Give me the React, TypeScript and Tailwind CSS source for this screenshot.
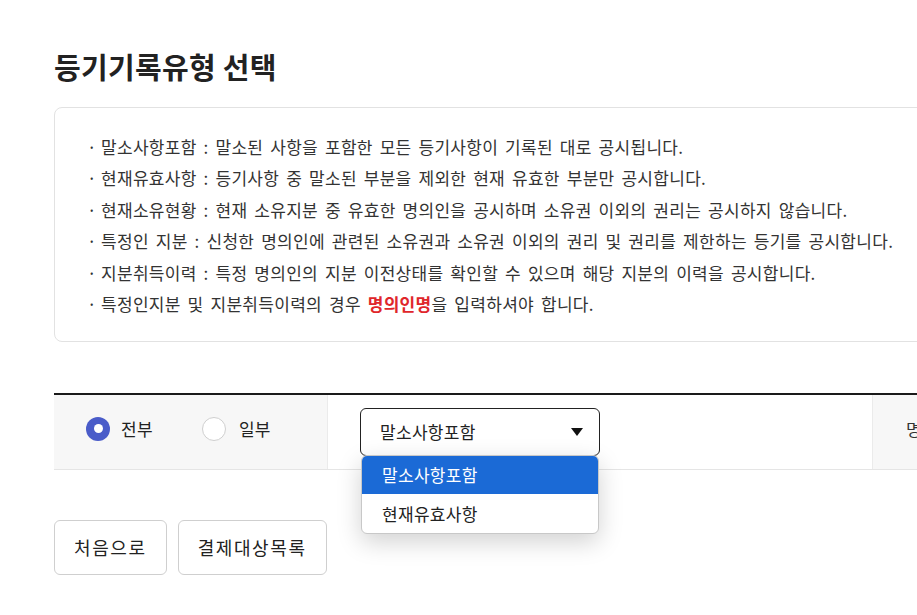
import { useState } from "react";

const notes = [
  "말소사항포함 : 말소된 사항을 포함한 모든 등기사항이 기록된 대로 공시됩니다.",
  "현재유효사항 : 등기사항 중 말소된 부분을 제외한 현재 유효한 부분만 공시합니다.",
  "현재소유현황 : 현재 소유지분 중 유효한 명의인을 공시하며 소유권 이외의 권리는 공시하지 않습니다.",
  "특정인 지분 : 신청한 명의인에 관련된 소유권과 소유권 이외의 권리 및 권리를 제한하는 등기를 공시합니다.",
  "지분취득이력 : 특정 명의인의 지분 이전상태를 확인할 수 있으며 해당 지분의 이력을 공시합니다.",
];

const options = ["말소사항포함", "현재유효사항"];

export default function App() {
  const [scope, setScope] = useState<"all" | "part">("all");
  const [selected, setSelected] = useState(options[0]);

  return (
    <div
      className="w-[917px] h-[615px] overflow-hidden bg-white text-[#222] tracking-[0.3px]"
      style={{ fontFamily: '"Noto Sans CJK KR", "Noto Sans", sans-serif' }}
    >
      <div className="w-[1200px] pl-[54px] pt-[43px]">
        {/* Title */}
        <h2 className="text-[29px] font-bold leading-[46px] tracking-[0.3px]">등기기록유형 선택</h2>

        {/* Notice box */}
        <div className="mt-[18px] border border-[#e2e2e2] rounded-[8px] pl-[32px] pt-[23px] pb-[22px]">
          <ul className="text-[17px] text-[#333] leading-[31.4px] [word-spacing:2.8px]">
            {notes.map((n) => (
              <li key={n} className="flex">
                <span className="w-[14px]">·</span>
                <span>{n}</span>
              </li>
            ))}
            <li className="flex">
              <span className="w-[14px]">·</span>
              <span>
                특정인지분 및 지분취득이력의 경우 <b className="text-[#e0262b] font-bold">명의인명</b>을 입력하셔야 합니다.
              </span>
            </li>
          </ul>
        </div>

        {/* Selection row */}
        <div className="mt-[51px] border-t-2 border-[#1a1a1a] border-b border-b-[#e5e5e5] flex h-[77px]">
          <div className="w-[274px] bg-[#f7f7f7] border-r border-[#ebebeb] flex items-center pl-[32px] pb-[7px] gap-[49px]">
            <label className="flex items-center gap-[11px] text-[17px] cursor-pointer" onClick={() => setScope("all")}>
              <span
                className={`w-[24px] h-[24px] rounded-full flex items-center justify-center ${
                  scope === "all" ? "bg-[#4a5cc9]" : "bg-white border border-[#cfcfcf]"
                }`}
              >
                {scope === "all" && <span className="w-[9px] h-[9px] rounded-full bg-white" />}
              </span>
              전부
            </label>
            <label className="flex items-center gap-[13px] text-[17px] cursor-pointer" onClick={() => setScope("part")}>
              <span
                className={`w-[24px] h-[24px] rounded-full flex items-center justify-center ${
                  scope === "part" ? "bg-[#4a5cc9]" : "bg-white border border-[#cfcfcf]"
                }`}
              >
                {scope === "part" && <span className="w-[9px] h-[9px] rounded-full bg-white" />}
              </span>
              일부
            </label>
          </div>

          <div className="w-[544px] flex items-center pl-[32px] pb-[1px]">
            <div className="relative">
              <button className="w-[240px] h-[48px] border border-[#222] rounded-[6px] bg-white flex items-center justify-between pl-[19px] pr-[16px] text-[17px]">
                {selected}
                <svg width="12" height="8" viewBox="0 0 12 8">
                  <path d="M0 0h12L6 8z" fill="#111" />
                </svg>
              </button>
              {/* Open list */}
              <ul className="absolute left-[1px] top-[47px] w-[238px] bg-white rounded-[6px] border border-[#c8c8c8] shadow-[0_8px_24px_rgba(0,0,0,0.18)] overflow-hidden z-10 text-[17px]">
                {options.map((o, i) => (
                  <li
                    key={o}
                    onClick={() => setSelected(o)}
                    className={`h-[38.5px] flex items-center pl-[20px] ${
                      i === 0 ? "bg-[#1b6ad6] text-white" : "text-[#222]"
                    }`}
                  >
                    {o}
                  </li>
                ))}
              </ul>
            </div>
          </div>

          <div className="flex-1 bg-[#f7f7f7] border-l border-[#ebebeb] flex items-center pl-[33px] pb-[7px] text-[17px] text-[#333]">
            명의인명
          </div>
        </div>

        {/* Buttons */}
        <div className="mt-[50px] flex gap-[11px]">
          <button className="h-[55px] px-[19px] border border-[#cfcfcf] rounded-[6px] text-[18px] text-[#222] bg-white tracking-[1.6px]">
            처음으로
          </button>
          <button className="h-[55px] px-[19px] border border-[#cfcfcf] rounded-[6px] text-[18px] text-[#222] bg-white tracking-[1.6px]">
            결제대상목록
          </button>
        </div>
      </div>
    </div>
  );
}
